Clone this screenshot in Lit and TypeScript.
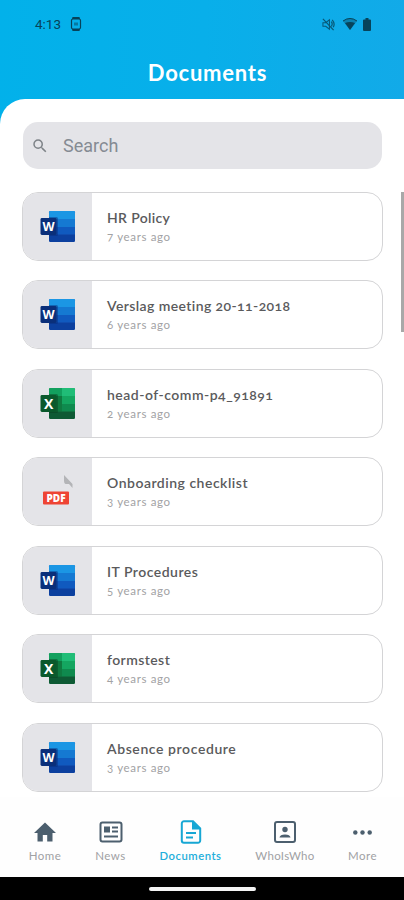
import { LitElement, html, css, svg } from "lit";
import { customElement, property } from "lit/decorators.js";

type Kind = "word" | "excel" | "pdf";
interface Doc { title: string; age: string; kind: Kind; track: number; }

const DOCS: Doc[] = [
  { title: "HR Policy", age: "7 years ago", kind: "word", track: 0.34 },
  { title: "Verslag meeting 20-11-2018", age: "6 years ago", kind: "word", track: 0.4 },
  { title: "head-of-comm-p4_91891", age: "2 years ago", kind: "excel", track: 0.49 },
  { title: "Onboarding checklist", age: "3 years ago", kind: "pdf", track: 0.5 },
  { title: "IT Procedures", age: "5 years ago", kind: "word", track: 0.49 },
  { title: "formstest", age: "4 years ago", kind: "excel", track: 0.42 },
  { title: "Absence procedure", age: "3 years ago", kind: "word", track: 0.59 },
];

const fileIcons = {
  word: svg`
    <rect x="9" y="0" width="26" height="31" rx="1.4" fill="#185abd"/>
    <path d="M10.4 0H33.6Q35 0 35 1.4V8H9V1.4Q9 0 10.4 0Z" fill="#1b96e4"/>
    <rect x="9" y="8" width="26" height="8" fill="#1579d2"/>
    <rect x="9" y="16" width="26" height="7.5" fill="#105abf"/>
    <path d="M9 23.5H35V29.6Q35 31 33.6 31H10.4Q9 31 9 29.6Z" fill="#0c409f"/>
    <path d="M9 6H16.5Q18 6 18 7.5V23.5Q18 25 16.5 25H9Z" fill="#082b78" opacity=".45"/>
    <rect x="0.500" y="7" width="16" height="17" rx="1.4" fill="#0a2f7a"/>
    <text x="8.600" y="20" text-anchor="middle" font-size="12.5" font-weight="700" fill="#fff">W</text>`,
  excel: svg`
    <rect x="9" y="0" width="26" height="31" rx="1.4" fill="#148f4f"/>
    <path d="M10.4 0H22V8H9V1.4Q9 0 10.4 0Z" fill="#12a05e"/>
    <path d="M22 0H33.6Q35 0 35 1.4V8H22Z" fill="#20bd77"/>
    <rect x="9" y="8" width="13" height="15.5" fill="#0f7a40"/>
    <rect x="22" y="8" width="13" height="8" fill="#14a660"/>
    <rect x="22" y="16" width="13" height="7.5" fill="#0f8a4e"/>
    <path d="M9 23.5H35V29.6Q35 31 33.6 31H10.4Q9 31 9 29.6Z" fill="#0e5a34"/>
    <path d="M9 6H16.5Q18 6 18 7.5V23.5Q18 25 16.5 25H9Z" fill="#083e20" opacity=".45"/>
    <rect x="0.500" y="7" width="16" height="17" rx="1.4" fill="#0a592c"/>
    <text x="8.600" y="20.500" text-anchor="middle" font-size="14" font-weight="700" fill="#fff">X</text>`,
  pdf: svg`
    <path d="M24 -1L32.500 8V12L29 8L25.500 8Q24 7.500 24 5Z" fill="#b3b4b7"/>
    <rect x="3" y="15.5" width="26" height="13" rx="1" fill="#ee4434"/>
    <text x="16" y="25.6" text-anchor="middle" font-size="10" font-weight="800" fill="#fff">PDF</text>`,
};

@customElement("doc-card")
export class DocCard extends LitElement {
  @property({ attribute: false }) doc!: Doc;
  static styles = css`
    :host { display: flex; box-sizing: border-box; height: 69px; border: 1.5px solid #d4d4d6; border-radius: 16px; overflow: hidden; background: #fff; }
    .thumb { width: 69px; flex: none; background: #e4e4e8; display: flex; align-items: center; box-sizing: border-box; padding-left: 17px; }
    svg { display: block; width: 35px; height: 31px; overflow: visible; font-family: "Open Sans", sans-serif; }
    .copy { padding: 15px 0 0 15px; white-space: nowrap; font-family: Lato, sans-serif; font-variant-numeric: oldstyle-nums; }
    .title { font-size: 14px; line-height: 19px; font-weight: 600; color: #5a5a5c; }
    .age { font-size: 11.5px; line-height: 18px; margin-top: 1px; color: #a2a2a4; letter-spacing: .65px; }
  `;
  render() {
    const d = this.doc;
    return html`<div class="thumb"><svg viewBox="0 0 35 31">${fileIcons[d.kind]}</svg></div>
      <div class="copy"><div class="title" style="letter-spacing:${d.track}px">${d.title}</div><div class="age">${d.age}</div></div>`;
  }
}

const TABS = [
  { label: "Home", cls: "home", icon: svg`<path d="M9.800 21.500v-6.500h4.400V21.500h5.300v-8.500H23L12 2.500 1 13h3.500V21.500z"/>` },
  { label: "News", cls: "news", icon: svg`<rect x="1.500" y="2.500" width="21" height="19" rx="2" fill="none" stroke="currentColor" stroke-width="2"/><path d="M5 6.500h6v6H5zM13 6.500h6v2h-6zM13 10.500h6v2h-6zM5 15.500h14v2H5z"/>` },
  { label: "Documents", cls: "docs", icon: svg`<path d="M14 1.200H5A2.200 2.200 0 0 0 2.800 3.400V20.600A2.200 2.200 0 0 0 5 22.800H19A2.200 2.200 0 0 0 21.200 20.600V8.400Z" fill="none" stroke="currentColor" stroke-width="2"/><path d="M13 1L22 9.500H13ZM7 12h10v2H7zM7 16.500h7v2H7z"/>` },
  { label: "WhoIsWho", cls: "who", icon: svg`<rect x="2" y="2" width="20" height="20" rx="2" fill="none" stroke="currentColor" stroke-width="2"/><circle cx="12" cy="9.500" r="2.700"/><path d="M6.500 17.500Q7 14.500 12 14.500T17.500 17.500Z"/>` },
  { label: "More", cls: "more", icon: svg`<circle cx="4.500" cy="12" r="2.300"/><circle cx="12" cy="12" r="2.300"/><circle cx="19.500" cy="12" r="2.300"/>` },
];

@customElement("app-root")
export class AppRoot extends LitElement {
  static styles = css`
    :host { display: flex; flex-direction: column; position: relative; height: 900px; overflow: hidden; background: linear-gradient(92deg, #02b1ea 0, #08afea 50%, #12aae8 100%) 0 0 / 100% 140px no-repeat #fff; font-family: Lato, sans-serif; }
    .status { height: 48px; flex: none; display: flex; align-items: center; box-sizing: border-box; padding: 0 33px 0 35px; color: #07435a; }
    .time { font: 400 13.5px Roboto, sans-serif; width: 35px; }
    .status svg { display: block; fill: currentColor; }
    .grow { flex: 1; }
    .mute { margin-right: 8px; } .wifi { margin-right: 6px; }
    h1 { margin: 0; height: 51px; flex: none; text-align: center; color: #fff; font-size: 22px; font-weight: 700; line-height: 50px; padding-left: 11px; letter-spacing: .75px; }
    .sheet { flex: 1; min-height: 0; background: #fff; border-top-left-radius: 25px; padding: 23px 21px 0 22px; overflow: hidden; }
    .search { height: 47px; border-radius: 15px; background: #e4e4e8; margin: 0 1px; display: flex; align-items: center; color: #858b93; font: 18px Roboto, sans-serif; }
    .search svg { width: 18px; height: 18px; margin: 0 14px 0 8px; fill: #7e8388; }
    .list { display: flex; flex-direction: column; gap: 19.6px; margin-top: 22.5px; }
    .scroll { position: absolute; right: 0; top: 192px; width: 3px; height: 140px; background: #a8a8a8; }
    nav { flex: none; height: 80px; background: #fefefe; display: flex; box-sizing: border-box; padding: 22px 5px 0 11.5px; color: #4c5f6e; }
    .tab { display: flex; flex-direction: column; align-items: center; }
    .tab svg { width: 24px; height: 24px; margin: 1px; display: block; fill: currentColor; }
    .tab span { font-size: 11.5px; line-height: 18px; color: #a0a1a4; letter-spacing: .5px; margin-top: 2px; }
    .home { width: 67px; } .news { width: 64px; } .docs { width: 96px; color: #17a7d4; } .who { width: 93px; } .more { width: 62px; }
    .docs span { color: #23aedb; font-weight: 600; font-size: 11.3px; }
    .who span { letter-spacing: .3px; }
    .tab.more svg { width: 23px; height: 23px; margin: 1.5px; }
    .system { height: 23px; flex: none; background: #000; display: flex; align-items: center; justify-content: center; }
    .pill { width: 107px; height: 4px; border-radius: 2px; background: #f4f4f4; }
  `;
  render() {
    return html`
      <div class="status">
        <span class="time">4:13</span>
        <svg width="12" height="14" viewBox="0 0 12 14"><path d="M2.500 0h7l.5 2h-8zM2.500 14h7l.5-2h-8z"/><rect x="1.500" y="2" width="9" height="10" rx="1.500" fill="none" stroke="currentColor" stroke-width="1.200"/><path d="M4 5.500h4v3H4z" opacity=".5"/></svg>
        <span class="grow"></span>
        <svg class="mute" width="13" height="13" viewBox="0 0 14 14" opacity=".8"><path d="M1 5h3l4-3v10l-4-3H1z" fill="none" stroke="currentColor" stroke-width="1.100"/><path d="M1 1l11.500 12M10 4q2 2.500 0 5M11 2q3.500 4 1 8" fill="none" stroke="currentColor" stroke-width="1.300"/></svg>
        <svg class="wifi" width="14" height="12" viewBox="0 0 14 12"><path d="M0 3Q7-3 14 3L7 12Z" opacity=".4"/><path d="M2 5Q7 3 12 5L7 12Z"/><path d="M0 3Q7-2 14 3" fill="none" stroke="currentColor"/></svg>
        <svg width="8" height="13" viewBox="0 0 8 13"><path d="M2.500 0h3v1.500H7q1 0 1 1V12q0 1-1 1H1q-1 0-1-1V2.500q0-1 1-1h1.500z"/></svg>
      </div>
      <h1>Documents</h1>
      <div class="sheet">
        <div class="search"><svg viewBox="0 0 24 24"><path d="M15.500 14h-.79l-.28-.27A6.470 6.470 0 0 0 16 9.500 6.500 6.500 0 1 0 9.500 16c1.610 0 3.090-.59 4.230-1.570l.27.28v.79l5 4.990L20.490 19zm-6 0C7.010 14 5 11.990 5 9.500S7.010 5 9.500 5 14 7.010 14 9.500 11.990 14 9.500 14z"/></svg><span>Search</span></div>
        <div class="list">${DOCS.map(d => html`<doc-card .doc=${d}></doc-card>`)}</div>
      </div>
      <div class="scroll"></div>
      <nav>${TABS.map(t => html`<div class="tab ${t.cls}"><svg viewBox="0 0 24 24">${t.icon}</svg><span>${t.label}</span></div>`)}</nav>
      <div class="system"><div class="pill"></div></div>`;
  }
}
